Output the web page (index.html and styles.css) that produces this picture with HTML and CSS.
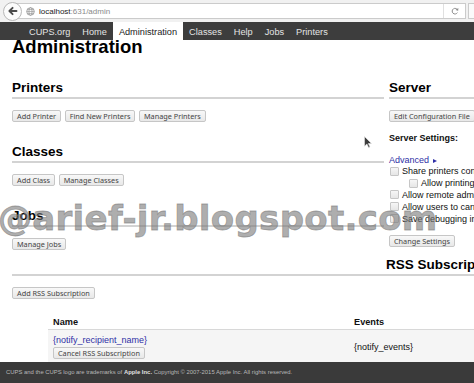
FILE: index.html
```html
<!DOCTYPE html>
<html>
<head>
<meta charset="utf-8">
<title>Administration - CUPS</title>
<link rel="stylesheet" href="styles.css">
</head>
<body>
<div class="chrome">
  <div class="back">
    <svg width="11" height="10" viewBox="0 0 11 10"><path d="M9.5 5H2.8M5.6 1.8L2.4 5l3.2 3.2" fill="none" stroke="#4a4a4a" stroke-width="1.9" stroke-linecap="round" stroke-linejoin="round"/></svg>
  </div>
  <div class="url">
    <svg class="globe" width="9" height="9" viewBox="0 0 9 9"><circle cx="4.5" cy="4.5" r="3.8" fill="none" stroke="#9a9a9a" stroke-width="0.9"/><ellipse cx="4.5" cy="4.5" rx="1.6" ry="3.8" fill="none" stroke="#9a9a9a" stroke-width="0.8"/><path d="M0.8 4.5h7.4M1.4 2.6h6.2M1.4 6.4h6.2" stroke="#9a9a9a" stroke-width="0.7"/></svg>
    <span class="host">localhost</span><span class="path">:631/admin</span>
    <span class="reload"><svg width="8" height="8" viewBox="0 0 8 8"><path d="M6.6 3.2A2.8 2.8 0 1 0 6.4 5.6" fill="none" stroke="#8c8c8c" stroke-width="1"/><path d="M7.4 0.9L7.1 3.7 4.5 2.9z" fill="#8c8c8c"/></svg></span>
  </div>
  <div class="menu"></div>
</div>

<nav class="nav">
  <a href="#">CUPS.org</a>
  <a href="#">Home</a>
  <a href="#" class="active">Administration</a>
  <a href="#">Classes</a>
  <a href="#">Help</a>
  <a href="#">Jobs</a>
  <a href="#">Printers</a>
</nav>

<main class="page">
  <h1 class="title">Administration</h1>
  <div class="cols">
    <div class="left">
      <section class="sec">
        <h2 class="sec-title">Printers</h2>
        <div class="btns"><button class="btn">Add Printer</button><button class="btn">Find New Printers</button><button class="btn">Manage Printers</button></div>
      </section>
      <section class="sec">
        <h2 class="sec-title">Classes</h2>
        <div class="btns"><button class="btn">Add Class</button><button class="btn">Manage Classes</button></div>
      </section>
      <section class="sec">
        <h2 class="sec-title">Jobs</h2>
        <div class="btns"><button class="btn">Manage Jobs</button></div>
      </section>
    </div>
    <div class="right">
      <h2 class="sec-title">Server</h2>
      <div class="btns"><button class="btn">Edit Configuration File</button></div>
      <p class="settings">Server Settings:</p>
      <a href="#" class="adv">Advanced <span class="tri"></span></a>
      <ul class="checks">
        <li><span class="box"></span>Share printers connected to this system</li>
        <li class="indent"><span class="box"></span>Allow printing from the Internet</li>
        <li><span class="box"></span>Allow remote administration</li>
        <li><span class="box"></span>Allow users to cancel any job (not just their own)</li>
        <li><span class="box"></span>Save debugging information for troubleshooting</li>
      </ul>
      <div class="btns btns-change"><button class="btn">Change Settings</button></div>
    </div>
  </div>

  <h2 class="sec-title rss">RSS Subscriptions</h2>
  <div class="btns"><button class="btn">Add RSS Subscription</button></div>

  <table class="subs">
    <thead>
      <tr><th class="name">Name</th><th>Events</th></tr>
    </thead>
    <tbody>
      <tr>
        <td><div class="stack"><a href="#" class="rcpt">{notify_recipient_name}</a><button class="btn">Cancel RSS Subscription</button></div></td>
        <td>{notify_events}</td>
      </tr>
    </tbody>
  </table>
</main>

<footer class="foot">CUPS and the CUPS logo are trademarks of <b>Apple Inc.</b> Copyright © 2007-2015 Apple Inc. All rights reserved.</footer>

<div class="watermark">@arief-jr.blogspot.com</div>
<svg class="cursor" width="8" height="12" viewBox="0 0 8 12"><path d="M0.5 0.5V10.2L2.9 8 4.6 11.6 6 11 4.3 7.5H7.5Z" fill="#3c3c3c" stroke="#e8e8e8" stroke-width="0.6"/></svg>
</body>
</html>
```

FILE: styles.css
```css
html, body {
  margin: 0;
  padding: 0;
  width: 474px;
  height: 383px;
  overflow: hidden;
  background: #fff;
}
body {
  position: relative;
  font-family: "Liberation Sans", Arial, sans-serif;
  color: #111;
}

/* browser toolbar */
.chrome {
  height: 22px;
  box-sizing: border-box;
  background: #f1f1f1;
  display: flex;
  align-items: center;
  padding-left: 3px;
}
.back {
  position: relative;
  z-index: 1;
  width: 19px;
  height: 19px;
  box-sizing: border-box;
  border-radius: 50%;
  border: 1px solid #b8b8b8;
  background: #fbfbfb;
  display: flex;
  align-items: center;
  justify-content: center;
  flex: none;
}
.url {
  margin-left: -9px;
  width: 453px;
  height: 16px;
  box-sizing: border-box;
  border: 1px solid #cbcbcb;
  background: #fff;
  display: flex;
  align-items: center;
  padding-left: 12px;
  flex: none;
}
.globe { margin-right: 4px; flex: none; }
.host { font-size: 8px; color: #222; }
.path { font-size: 8px; color: #8a8a8a; }
.reload {
  margin-left: auto;
  width: 21px;
  height: 100%;
  border-left: 1px solid #e0e0e0;
  display: flex;
  align-items: center;
  justify-content: center;
}
.menu {
  margin-left: 2px;
  width: 10px;
  height: 16px;
  box-sizing: border-box;
  border: 1px solid #cbcbcb;
  border-right: none;
  background: #fafafa;
  flex: none;
}

/* CUPS nav */
.nav {
  height: 18px;
  background: #3d3d3d;
  display: flex;
  padding-left: 23px;
}
.nav a {
  padding: 2px 6px 0;
  line-height: 16px;
  font-size: 9.2px;
  color: #e4e4e4;
  text-decoration: none;
  white-space: nowrap;
}
.nav a.active {
  background: #fff;
  color: #222;
}

/* page */
.page { padding-left: 12px; }
.title {
  margin: 0;
  font-size: 18.5px;
  font-weight: bold;
  line-height: 14px;
  color: #000;
}
.cols {
  display: grid;
  grid-template-columns: 372px minmax(0, 1fr);
  column-gap: 5px;
  margin-top: 26px;
}
.sec { margin-bottom: 22px; }
.sec:last-child { margin-bottom: 0; }
.sec-title {
  margin: 0;
  font-size: 13.5px;
  font-weight: bold;
  line-height: 16px;
  padding-bottom: 1px;
  border-bottom: 2px solid #d3d3d3;
  color: #000;
  white-space: nowrap;
}
.btns {
  display: flex;
  gap: 3.5px;
  margin-top: 11px;
}
.btn {
  box-sizing: border-box;
  height: 12px;
  margin: 0;
  padding: 0 4px;
  font-family: "Noto Sans", "Open Sans", sans-serif;
  font-size: 7.3px;
  line-height: 10px;
  color: #444;
  border: 1px solid #c6c6c6;
  border-radius: 2px;
  background: linear-gradient(#f8f8f8, #e8e8e8);
  white-space: nowrap;
  flex: none;
}

/* server column */
.settings {
  margin: 10px 0 0;
  font-size: 9px;
  font-weight: bold;
  line-height: 12px;
  color: #111;
  white-space: nowrap;
}
.adv {
  display: block;
  margin-top: 9.5px;
  font-size: 9px;
  line-height: 12px;
  color: #2f2fa6;
  text-decoration: none;
  white-space: nowrap;
}
.tri {
  display: inline-block;
  width: 0;
  height: 0;
  border-left: 4.5px solid #2f2fa6;
  border-top: 2.5px solid transparent;
  border-bottom: 2.5px solid transparent;
  margin-left: 1px;
}
.checks {
  list-style: none;
  margin: 0;
  padding: 0;
}
.checks li {
  display: flex;
  align-items: center;
  height: 11.8px;
  font-size: 9px;
  color: #111;
  white-space: nowrap;
  padding-left: 1px;
}
.checks li.indent { padding-left: 20px; }
.box {
  flex: none;
  width: 9px;
  height: 9px;
  box-sizing: border-box;
  border: 1px solid #c6c6c6;
  border-radius: 1px;
  background: linear-gradient(#f6f6f6, #e6e6e6);
  margin-right: 3px;
}
.btns-change { margin-top: 10.5px; }

/* RSS */
.rss {
  margin-top: 7px;
  padding-left: 374px;
}
.subs {
  margin-top: 15px;
  margin-left: 36px;
  width: 426px;
  border-collapse: collapse;
}
.subs th {
  text-align: left;
  font-size: 9.2px;
  font-weight: bold;
  line-height: 12px;
  padding: 2px 5px 1px;
  border-bottom: 1px solid #d8d8d8;
  color: #111;
}
.subs th.name { width: 291px; }
.subs td {
  background: #f5f5f5;
  padding: 4px 5px 3px;
  font-size: 9px;
  line-height: 12px;
  vertical-align: middle;
  color: #111;
}
.stack {
  display: flex;
  flex-direction: column;
  align-items: flex-start;
  gap: 1px;
}
.rcpt {
  color: #2f2fa6;
  text-decoration: none;
}

/* footer */
.foot {
  height: 21px;
  background: #3a3a3a;
  color: #b8b8b8;
  font-size: 5.9px;
  line-height: 21px;
  padding-left: 6px;
  white-space: nowrap;
}
.foot b { color: #e0e0e0; }

/* overlays */
.watermark {
  position: absolute;
  left: -2px;
  top: 201px;
  font-family: "DejaVu Sans", sans-serif;
  font-weight: bold;
  font-size: 34px;
  line-height: 34px;
  letter-spacing: 0.3px;
  color: rgba(120, 120, 120, 0.6);
  -webkit-text-stroke: 0.8px rgba(120, 120, 120, 0.6);
  white-space: nowrap;
  pointer-events: none;
}
.cursor {
  position: absolute;
  left: 364px;
  top: 136px;
}
```
